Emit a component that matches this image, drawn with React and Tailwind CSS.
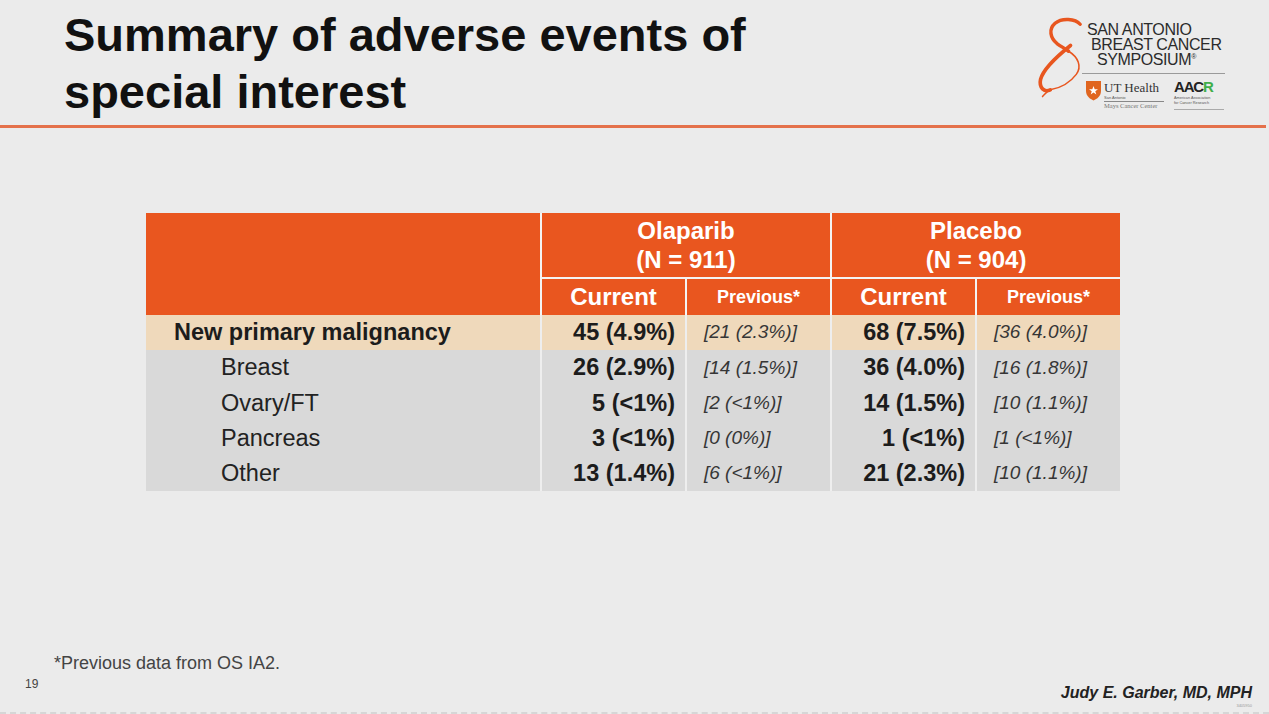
import React from 'react';

const font = "font-['Liberation_Sans',Arial,sans-serif]";

const rows = [
  { label: 'Breast', oc: '26 (2.9%)', op: '[14 (1.5%)]', pc: '36 (4.0%)', pp: '[16 (1.8%)]' },
  { label: 'Ovary/FT', oc: '5 (<1%)', op: '[2 (<1%)]', pc: '14 (1.5%)', pp: '[10 (1.1%)]' },
  { label: 'Pancreas', oc: '3 (<1%)', op: '[0 (0%)]', pc: '1 (<1%)', pp: '[1 (<1%)]' },
  { label: 'Other', oc: '13 (1.4%)', op: '[6 (<1%)]', pc: '21 (2.3%)', pp: '[10 (1.1%)]' },
];

function Swirl() {
  return (
    <svg width="54" height="84" viewBox="0 0 56 86" className="shrink-0">
      {/* upper loop */}
      <path d="M52 8 C47 2, 33 1, 26 7 C19 13, 21 22, 28 28 C32 31, 36 33, 40 36" fill="none" stroke="#e8561f" strokeWidth="3.6" strokeLinecap="round" />
      {/* lower loop, thick left side */}
      <path d="M42 30 C32 38, 14 54, 11 65 C9 74, 15 79, 21 76" fill="none" stroke="#e8561f" strokeWidth="3.8" strokeLinecap="round" />
      {/* thin right side and tail */}
      <path d="M40 36 C50 42, 54 52, 48 60 C42 68, 32 74, 21 76 C18 77, 16 80, 13 83" fill="none" stroke="#e8561f" strokeWidth="1.6" strokeLinecap="round" />
    </svg>
  );
}

function Logo() {
  return (
    <div className={`flex mr-[42px] mt-[16px] ${font}`}>
      <div className="-mr-[2px]">
        <Swirl />
      </div>
      <div className="w-[145px] flex flex-col">
        <div className="text-[16px] leading-[15px] text-[#2b2b2b] tracking-[-0.4px] mt-[6px]">
          <div className="pl-[5px]">SAN ANTONIO</div>
          <div className="pl-[9px]">BREAST CANCER</div>
          <div className="pl-[15px] leading-[15px]">
            SYMPOSIUM<span className="text-[7px] leading-none align-[6px]">®</span>
          </div>
        </div>
        <div className="h-px bg-[#9a9a9a] mt-[6px] w-[143px]" />
        <div className="flex mt-[5px] gap-[10px]">
          <div className="flex gap-[2px] ml-[3px]">
            <svg width="17" height="22" viewBox="0 0 17 22">
              <path d="M1 2 L16 2 L16 12 C16 17, 12 20, 8.5 21.5 C5 20, 1 17, 1 12 Z" fill="#e0651f" />
              <path d="M8.5 7 L9.7 10.3 L13 10.3 L10.3 12.3 L11.3 15.6 L8.5 13.6 L5.7 15.6 L6.7 12.3 L4 10.3 L7.3 10.3 Z" fill="#fff" />
            </svg>
            <div className="flex flex-col">
              <div className="font-['Liberation_Serif',serif] text-[13px] leading-[14px] text-[#333] mt-[2px]">UT Health</div>
              <div className="text-[4px] leading-[5px] text-[#555]">San Antonio</div>
              <div className="h-px bg-[#888] w-[60px] mt-[1px]" />
              <div className="font-['Liberation_Serif',serif] text-[6.5px] leading-[8px] text-[#777]">Mays Cancer Center</div>
            </div>
          </div>
          <div className="flex flex-col">
            <div className="text-[15px] leading-[16px] font-bold tracking-[-1.2px] text-[#222]">
              AAC<span className="text-[#3fae49]">R</span>
            </div>
            <div className="text-[3.8px] leading-[5px] text-[#555] mt-[1px]">American Association</div>
            <div className="text-[3.8px] leading-[5px] text-[#555]">for Cancer Research</div>
            <div className="h-px bg-[#aaa] w-[50px] mt-[3px]" />
          </div>
        </div>
      </div>
    </div>
  );
}

export default function App() {
  const hd = 'bg-[#e9561f] text-white font-bold text-center align-middle';
  const val = 'text-right pr-[10px] font-bold text-[23.5px] text-[#1c1c1c] align-middle border-l-2 border-[#eeeeee]';
  const prev = 'text-left pl-[17px] italic text-[19px] text-[#363636] align-middle border-l-2 border-[#eeeeee]';

  return (
    <div className={`w-full h-[714px] bg-[#ebebeb] flex flex-col overflow-hidden ${font}`}>
      {/* Header */}
      <div className="h-[125px] flex justify-between items-start">
        <h1 className="pl-[64px] pt-[6px] text-[47px] leading-[57px] font-bold text-[#111]">
          Summary of adverse events of
          <br />
          special interest
        </h1>
        <Logo />
      </div>
      <div className="h-[3px] bg-[#e4714b] w-[1266px]" />

      {/* Table */}
      <div className="pl-[146px] pt-[85px]">
        <table className="table-fixed border-separate border-spacing-0 w-[974px]">
          <colgroup>
            <col className="w-[394px]" />
            <col className="w-[145px]" />
            <col className="w-[145px]" />
            <col className="w-[145px]" />
            <col className="w-[145px]" />
          </colgroup>
          <thead>
            <tr className="h-[66px]">
              <th rowSpan={2} className="bg-[#e9561f]" />
              <th colSpan={2} className={`${hd} text-[24px] leading-[29px] border-l-2 border-b-2 border-[#f4f4f4]`}>
                Olaparib
                <br />
                (N = 911)
              </th>
              <th colSpan={2} className={`${hd} text-[24px] leading-[29px] border-l-2 border-b-2 border-[#f4f4f4]`}>
                Placebo
                <br />
                (N = 904)
              </th>
            </tr>
            <tr className="h-[35px]">
              <th className={`${hd} text-[24px] border-l-2 border-[#f4f4f4]`}>Current</th>
              <th className={`${hd} text-[18px] border-l-2 border-[#f4f4f4]`}>Previous*</th>
              <th className={`${hd} text-[24px] border-l-2 border-[#f4f4f4]`}>Current</th>
              <th className={`${hd} text-[18px] border-l-2 border-[#f4f4f4]`}>Previous*</th>
            </tr>
          </thead>
          <tbody>
            <tr className="h-[35px] bg-[#efd9bb]">
              <td className="pl-[28px] font-bold text-[23.5px] text-[#1c1c1c] align-middle">New primary malignancy</td>
              <td className={val}>45 (4.9%)</td>
              <td className={prev}>[21 (2.3%)]</td>
              <td className={val}>68 (7.5%)</td>
              <td className={prev}>[36 (4.0%)]</td>
            </tr>
            {rows.map((r) => (
              <tr key={r.label} className="h-[35px] bg-[#d9d9d9]">
                <td className="pl-[75px] text-[23.5px] text-[#222] align-middle">{r.label}</td>
                <td className={val}>{r.oc}</td>
                <td className={prev}>{r.op}</td>
                <td className={val}>{r.pc}</td>
                <td className={prev}>{r.pp}</td>
              </tr>
            ))}
          </tbody>
        </table>
      </div>

      {/* Footer */}
      <div className="pl-[54px] mt-[162px] text-[18px] leading-[20px] text-[#444]">*Previous data from OS IA2.</div>
      <div className="flex justify-between items-start">
        <div className="ml-[25px] mt-[4px] text-[12px] leading-[14px] text-[#444]">19</div>
        <div className="mr-[17px] mt-[11px] flex flex-col items-end">
          <div className="text-[16px] leading-[18px] font-bold italic text-[#222]">Judy E. Garber, MD, MPH</div>
          <div className="text-[4px] leading-[5px] text-[#999] mt-[1px]">3405950</div>
        </div>
      </div>
      <div className="mt-auto border-t-2 border-dashed border-[#d6d6d6]" />
    </div>
  );
}
